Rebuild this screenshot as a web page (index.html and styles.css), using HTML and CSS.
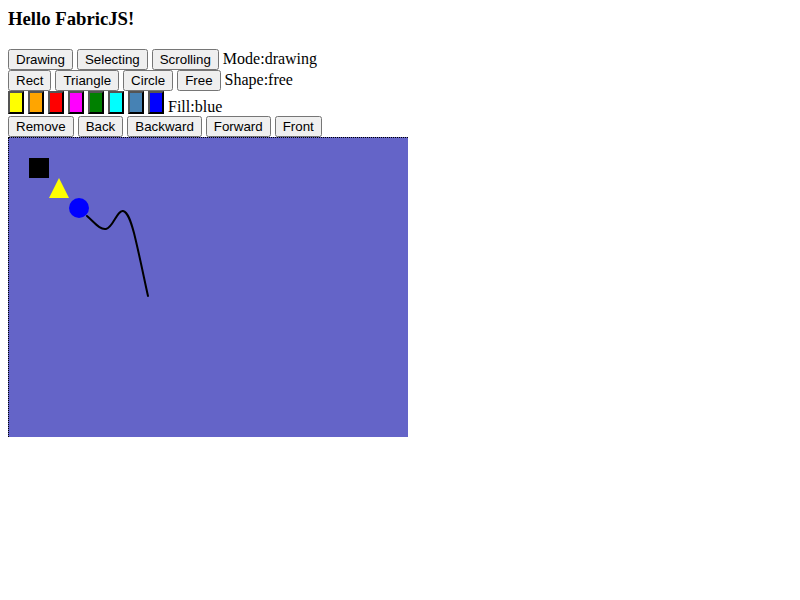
FILE: index.html
```html
<!DOCTYPE html>
<html>
<head>
<meta charset="utf-8">
<link rel="stylesheet" href="styles.css">
</head>
<body>
<h3 class="title">Hello FabricJS!</h3>
<div class="row">
  <button class="btn">Drawing</button>
  <button class="btn">Selecting</button>
  <button class="btn">Scrolling</button>
  <span class="label">Mode:drawing</span>
</div>
<div class="row">
  <button class="btn">Rect</button>
  <button class="btn">Triangle</button>
  <button class="btn">Circle</button>
  <button class="btn">Free</button>
  <span class="label">Shape:free</span>
</div>
<div class="row">
  <button class="swatch sw-yellow"></button>
  <button class="swatch sw-orange"></button>
  <button class="swatch sw-red"></button>
  <button class="swatch sw-magenta"></button>
  <button class="swatch sw-green"></button>
  <button class="swatch sw-cyan"></button>
  <button class="swatch sw-steel"></button>
  <button class="swatch sw-blue"></button>
  <span class="label">Fill:blue</span>
</div>
<div class="row">
  <button class="btn">Remove</button>
  <button class="btn">Back</button>
  <button class="btn">Backward</button>
  <button class="btn">Forward</button>
  <button class="btn">Front</button>
</div>
<div class="canvas">
  <svg class="drawing" width="399" height="299" viewBox="0 0 399 299">
    <rect x="20" y="20" width="20" height="20" fill="#000"/>
    <polygon points="50,40 60,60 40,60" fill="#ffff00"/>
    <circle cx="70" cy="70" r="10" fill="#0000ff"/>
    <path d="M78 78 C86 85 91 92 97 91 C104 90 108 72 114 73 C119 74 122 84 125 95 C130 115 135 140 139 158" fill="none" stroke="#000" stroke-width="2" stroke-linecap="round"/>
  </svg>
</div>
</body>
</html>
```
FILE: styles.css
```css
body {
  margin: 8px;
  font-family: "Liberation Serif", "Times New Roman", serif;
  font-size: 16px;
  background: #fff;
  color: #000;
}
.title {
  margin: 0 0 18.72px 0;
  font-size: 18.72px;
  font-weight: bold;
}
.row {
  line-height: normal;
}
.btn {
  font-family: "Liberation Sans", Arial, sans-serif;
  font-size: 13.333px;
}
.label {
  font-family: "Liberation Serif", "Times New Roman", serif;
}
.swatch {
  width: 16px;
  height: 23px;
  padding: 0;
  vertical-align: baseline;
}
.sw-yellow { background: yellow; }
.sw-orange { background: orange; }
.sw-red { background: red; }
.sw-magenta { background: magenta; }
.sw-green { background: green; }
.sw-cyan { background: cyan; }
.sw-steel { background: steelblue; }
.sw-blue { background: blue; }
.canvas {
  width: 399px;
  height: 299px;
  border-top: 1px dotted #000;
  border-left: 1px dotted #000;
  background: #6464c8;
}
.drawing {
  display: block;
}
```
